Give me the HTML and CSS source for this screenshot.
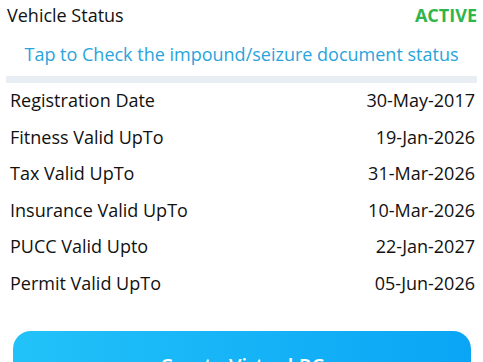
FILE: index.html
```html
<!DOCTYPE html>
<html lang="en">
<head>
<meta charset="UTF-8" />
<meta name="viewport" content="width=device-width, initial-scale=1" />
<title>Vehicle Status</title>
<link rel="stylesheet" href="styles.css">
</head>
<body>
  <div class="status-head">
    <span class="status-label">Vehicle Status</span>
    <span class="status-value">ACTIVE</span>
  </div>
  <a class="impound-link" href="#">Tap to Check the impound/seizure document status</a>
  <div class="divider"></div>
  <div class="details">
    <div class="row"><span>Registration Date</span><span>30-May-2017</span></div>
    <div class="row"><span>Fitness Valid UpTo</span><span>19-Jan-2026</span></div>
    <div class="row"><span>Tax Valid UpTo</span><span>31-Mar-2026</span></div>
    <div class="row"><span>Insurance Valid UpTo</span><span>10-Mar-2026</span></div>
    <div class="row"><span>PUCC Valid Upto</span><span>22-Jan-2027</span></div>
    <div class="row"><span>Permit Valid UpTo</span><span>05-Jun-2026</span></div>
  </div>
  <button class="rc-btn">Create Virtual RC</button>
</body>
</html>
```

FILE: styles.css
```css
/* Base */
* {
  box-sizing: border-box;
}
body {
  margin: 0;
  background: #fff;
  font-family: 'Open Sans', 'Noto Sans', sans-serif;
  color: #111;
  overflow: hidden;
}
.status-head {
  display: flex;
  justify-content: space-between;
  align-items: center;
  padding: 2px 6px 0 7px;
  height: 28px;
}
.status-label {
  font-size: 18px;
}
.status-value {
  font-size: 18px;
  font-weight: 700;
  color: #2fb54a;
}
.impound-link {
  display: block;
  text-align: center;
  font-size: 18px;
  color: #29a4dc;
  text-decoration: none;
  margin-top: 13px;
  line-height: 26px;
}
.divider {
  height: 7px;
  margin: 9px 6px 0;
  background: #e8eef3;
}
/* Detail rows */
.details {
  padding: 0 8px 0 10px;
}
.row {
  display: flex;
  justify-content: space-between;
  font-size: 18px;
  line-height: 24px;
  height: 36.6px;
  padding-top: 5px;
}
.rc-btn {
  display: block;
  width: 458px;
  height: 70px;
  margin: 28px 0 0 13px;
  padding: 0;
  border: none;
  border-radius: 18px;
  background: linear-gradient(90deg, #22c2f9, #0aa5f5);
  color: #fff;
  font-family: inherit;
  font-size: 20px;
  font-weight: 600;
  line-height: 28px;
  text-align: center;
}
```
